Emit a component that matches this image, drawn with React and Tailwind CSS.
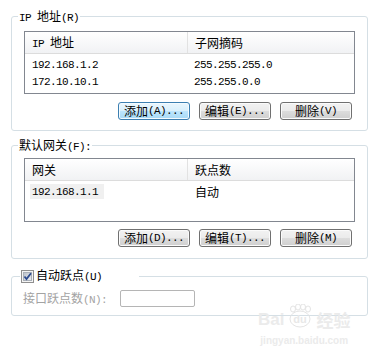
import React from "react";

function M({ children }) {
  return (
    <span className="[font-family:'Liberation_Mono',monospace] text-[11px] tracking-[-0.6px]">
      {children}
    </span>
  );
}

function Btn({ children, primary }) {
  return (
    <div
      className={
        primary
          ? "w-[72px] h-[18px] flex items-center justify-center rounded-[3px] border border-[#3c7fb1] bg-[linear-gradient(to_bottom,#eaf6fd_0%,#d9f0fc_50%,#bee6fd_50%,#a7d9f5_100%)] shadow-[inset_0_0_0_1px_#f4fbff] whitespace-nowrap"
          : "w-[72px] h-[18px] flex items-center justify-center rounded-[3px] border border-[#707070] bg-[linear-gradient(to_bottom,#f2f2f2_0%,#ebebeb_50%,#dddddd_50%,#cfcfcf_100%)] shadow-[inset_0_0_0_1px_#fbfbfb] whitespace-nowrap"
      }
    >
      {children}
    </div>
  );
}

function Header({ a, b }) {
  return (
    <div className="flex h-[22px] border-b border-[#dcdcdc] bg-[linear-gradient(to_bottom,#ffffff,#f1f2f4)]">
      <div className="w-[163px] pl-[7px] flex items-center border-r border-[#e2e2e2]">{a}</div>
      <div className="flex-1 pl-[7px] flex items-center">{b}</div>
    </div>
  );
}

function CheckBox() {
  return (
    <svg width="13" height="13" viewBox="0 0 13 13" className="shrink-0">
      <defs>
        <linearGradient id="cbg" x1="0" y1="0" x2="1" y2="1">
          <stop offset="0" stopColor="#b9bfc8" />
          <stop offset="1" stopColor="#eef0f3" />
        </linearGradient>
      </defs>
      <rect x="0.5" y="0.5" width="12" height="12" fill="#f4f4f4" stroke="#8f8f8f" />
      <rect x="2.5" y="2.5" width="8" height="8" fill="url(#cbg)" stroke="#aab0b8" />
      <path d="M3.5 6.5 L5.5 9 L10 3.2" fill="none" stroke="#2c4a8e" strokeWidth="1.8" />
    </svg>
  );
}

export default function App() {
  return (
    <div className="relative w-[378px] h-[357px] overflow-hidden bg-white text-black text-[12px] leading-[14px] pt-[9px] [font-family:'Noto_Sans_CJK_SC',sans-serif]">
      {/* IP addresses */}
      <fieldset className="ml-[11px] w-[357px] border border-[#d5dfe5] rounded-[3px] pb-[10px]">
        <legend className="ml-[6px] px-[1px] h-[14px]">
          <M>IP </M>地址<M>(R)</M>
        </legend>
        <div className="ml-[12px] mt-[8px] w-[331px] h-[63px] border border-[#828790] bg-white flex flex-col">
          <Header a={<span><M>IP </M>地址</span>} b={<span>子网摘码</span>} />
          <div className="pt-[1px]">
            <div className="flex h-[17px] items-center">
              <div className="w-[163px] pl-[7px]"><M>192.168.1.2</M></div>
              <div className="pl-[6px]"><M>255.255.255.0</M></div>
            </div>
            <div className="flex h-[17px] items-center">
              <div className="w-[163px] pl-[7px]"><M>172.10.10.1</M></div>
              <div className="pl-[6px]"><M>255.255.0.0</M></div>
            </div>
          </div>
        </div>
        <div className="flex gap-[9px] ml-[106px] mt-[8px]">
          <Btn primary>添加<M>(A)...</M></Btn>
          <Btn>编辑<M>(E)...</M></Btn>
          <Btn>删除<M>(V)</M></Btn>
        </div>
      </fieldset>

      {/* Default gateways */}
      <fieldset className="ml-[11px] mt-[7px] w-[357px] border border-[#d5dfe5] rounded-[3px] pb-[11px]">
        <legend className="ml-[6px] px-[1px] h-[14px]">
          默认网关<M>(F):</M>
        </legend>
        <div className="ml-[12px] mt-[6px] w-[331px] h-[64px] border border-[#828790] bg-white flex flex-col">
          <Header a={<span>网关</span>} b={<span>跃点数</span>} />
          <div className="pt-[3px]">
            <div className="flex h-[15px] items-center">
              <div className="w-[163px] pl-[5px] flex">
                <div className="h-[15px] pl-[2px] pr-[6px] flex items-center bg-[#f0f0f0]"><M>192.168.1.1</M></div>
              </div>
              <div className="pl-[7px]">自动</div>
            </div>
          </div>
        </div>
        <div className="flex gap-[9px] ml-[106px] mt-[7px]">
          <Btn>添加<M>(D)...</M></Btn>
          <Btn>编辑<M>(T)...</M></Btn>
          <Btn>删除<M>(M)</M></Btn>
        </div>
      </fieldset>

      {/* Automatic metric */}
      <fieldset className="ml-[11px] mt-[10px] w-[357px] border border-[#d5dfe5] rounded-[3px] pb-[8px]">
        <legend className="ml-[8px] w-[119px] h-[14px]">
          <div className="flex items-center h-[14px] pl-[1px]">
            <CheckBox />
            <span className="ml-[2px]">自动跃点<M>(U)</M></span>
          </div>
        </legend>
        <div className="flex items-center ml-[11px] mt-[7px]">
          <span className="text-[#a3a3a3] whitespace-nowrap">接口跃点数<M>(N):</M></span>
          <div className="ml-[13px] w-[75px] h-[17px] border border-[#b5b5b5] rounded-[2px] bg-white" />
        </div>
      </fieldset>

      {/* watermark */}
      <div className="absolute left-[258px] top-[302px] flex flex-col items-center text-[#ebebeb] pointer-events-none">
        <div className="flex items-end h-[26px]">
          <span className="[font-family:'Liberation_Sans',sans-serif] font-bold text-[17px] leading-[17px]">Bai</span>
          <svg width="30" height="24" viewBox="0 0 30 24" className="mx-[1px]">
            <g fill="none" stroke="#e4e4e4" strokeWidth="1">
              <ellipse cx="8" cy="5" rx="2.5" ry="3" />
              <ellipse cx="13" cy="3" rx="2.5" ry="3" />
              <ellipse cx="18" cy="3" rx="2.5" ry="3" />
              <ellipse cx="23" cy="5" rx="2.5" ry="3" />
              <ellipse cx="15" cy="15" rx="10" ry="8" />
            </g>
            <text x="15" y="19" textAnchor="middle" fontSize="11" fontWeight="bold" fill="#e8e8e8" fontFamily="Liberation Sans">du</text>
          </svg>
          <span className="font-bold text-[17px] leading-[17px]">经验</span>
        </div>
        <div className="[font-family:'Liberation_Sans',sans-serif] text-[10px] leading-[12px] mt-[7px] font-bold">jingyan.baidu.com</div>
      </div>
    </div>
  );
}
